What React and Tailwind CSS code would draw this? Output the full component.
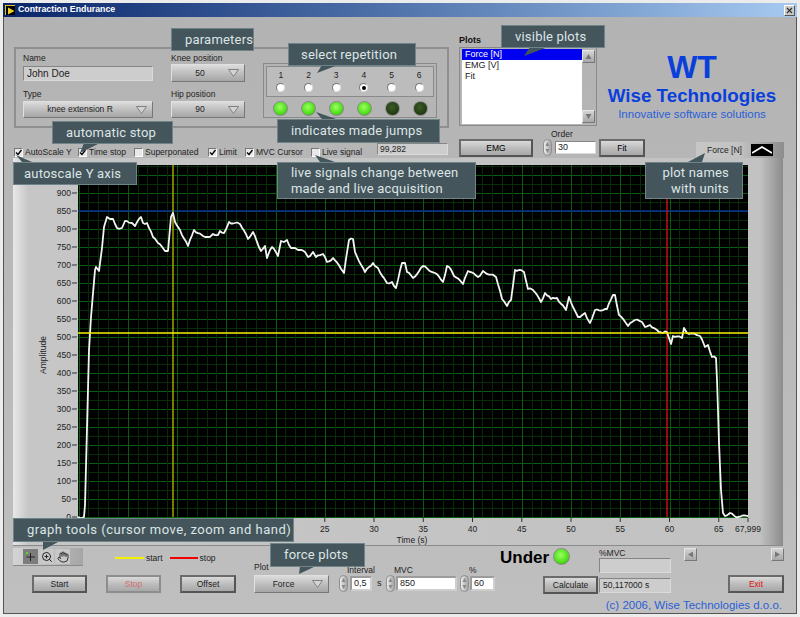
import { Hand, ZoomIn } from "lucide-react";

const knots =
  "78,517 84,517 85,505 89,350 91,317 95,270 96,267 99,271 102,248 104,227 107,217 110,219 113,219 117,228 122,228 125,221 132,223 135,226 141,217 143,223 147,223 153,237 158,243 165,251 168,251 171,217 173,213 175,222 180,230 188,246 194,230 203,236 208,237 213,234 218,235 220,231 224,233 229,222 240,224 248,239 253,232 261,251 265,246 267,258 270,250 272,247 278,256 281,241 284,242 287,240 291,248 298,250 305,252 308,257 313,252 316,257 323,254 327,262 333,258 344,273 349,240 353,239 355,252 365,272 373,263 378,268 387,283 392,282 396,288 402,263 405,263 407,272 413,278 423,266 435,273 443,282 447,266 449,267 454,276 463,284 468,271 478,277 483,271 496,277 502,299 507,306 511,300 515,270 519,270 524,272 528,289 533,290 541,302 545,293 551,299 557,298 566,310 569,297 578,317 585,313 590,323 595,310 607,309 613,295 615,295 619,315 628,326 635,320 642,322 645,327 650,325 657,330 663,333 667,332 671,344 673,336 682,338 684,328 687,333 700,336 705,347 708,345 712,357 716,358 717,380 718,410 719,443 721,490 723,513 725,516 730,513 738,517 748,516"
    .split(" ")
    .map((p) => p.split(",").map(Number));

// the measured signal is noisy, so add a little fixed jitter between the knots
const trace = knots
  .flatMap(([x, y], i) => {
    const next = knots[i + 1];
    if (!next || next[0] - x < 4) return [`${x},${y}`];
    const mid = [];
    for (let px = x + 2; px < next[0] - 1; px += 2) {
      const t = (px - x) / (next[0] - x);
      const jitter = Math.sin(px * 2.7) * 1.1;
      mid.push(`${px},${(y + (next[1] - y) * t + jitter).toFixed(1)}`);
    }
    return [`${x},${y}`, ...mid];
  })
  .join(" ");

const yValues = Array.from({ length: 19 }, (_, i) => i * 50);
const xValues = [25, 30, 35, 40, 45, 50, 55, 60, 65];
const xPos = (s) => 78.5 + s * 9.85;
const yPos = (v) => 517 - v * 0.36;

const inset = "border border-t-[#858585] border-l-[#858585] border-b-[#dadada] border-r-[#dadada]";

const Label = ({ children, className = "" }) => (
  <div className={`text-[8.5px] leading-[10px] text-[#222] whitespace-nowrap ${className}`}>{children}</div>
);

const Check = ({ label, checked, className }) => (
  <div className={`flex items-center gap-[2px] ${className}`}>
    <div className="w-[9px] h-[9px] shrink-0 bg-[#e8e8e8] border border-[#777] border-b-white border-r-white flex items-center justify-center">
      {checked && (
        <svg width="7" height="7" viewBox="0 0 7 7">
          <path d="M1 3.5L3 5.5L6.5 1" stroke="#000" strokeWidth="1.4" fill="none" />
        </svg>
      )}
    </div>
    <span className="text-[8.5px] leading-[10px] text-[#222] whitespace-nowrap">{label}</span>
  </div>
);

const Triangle = () => (
  <svg width="11" height="8" viewBox="0 0 11 8">
    <path d="M0.5 0.5H10.5L5.5 7.5Z" fill="#d4d4d4" stroke="#808080" />
  </svg>
);

const Dropdown = ({ value, className }) => (
  <div className={`flex items-center justify-between pr-[5px] bg-gradient-to-b from-[#dcdcdc] via-[#bfbfbf] to-[#a6a6a6] border border-t-[#e0e0e0] border-l-[#e0e0e0] border-b-[#777] border-r-[#777] ${className}`}>
    <span className="flex-1 text-center text-[8.5px] text-[#222] whitespace-nowrap">{value}</span>
    <Triangle />
  </div>
);

const Button = ({ children, className = "", disabled }) => (
  <div
    className={`h-[18px] flex items-center justify-center text-[8.5px] border-2 bg-gradient-to-b from-[#dadada] via-[#bdbdbd] to-[#a8a8a8] ${
      disabled ? "border-[#8d8d8d]" : "border-t-[#6b6b6b] border-l-[#6b6b6b] border-b-[#555] border-r-[#555]"
    } ${className}`}
  >
    {children}
  </div>
);

const Spinner = () => (
  <div className="w-[9px] h-[17px] shrink-0 rounded-full border border-[#8f8f8f] bg-gradient-to-r from-[#ececec] to-[#a4a4a4] flex items-center justify-center">
    <svg width="7" height="13" viewBox="0 0 7 13">
      <path d="M3.5 1L5.5 5H1.5Z M3.5 12L1.5 8H5.5Z" fill="#888" />
    </svg>
  </div>
);

const NumField = ({ value, className }) => (
  <div className={`h-[15px] flex items-center pl-[2px] bg-white text-[9px] text-[#222] border-2 border-[#9c9c9c] border-b-[#cfcfcf] border-r-[#cfcfcf] ${className}`}>
    {value}
  </div>
);

const Led = ({ on, className = "w-[15px] h-[15px]" }) => (
  <div
    className={`rounded-full border border-[#8a8a8a] ${className} ${
      on
        ? "bg-[radial-gradient(circle_at_45%_40%,#9cff60,#4fe01a_60%,#2f9a10)]"
        : "bg-[radial-gradient(circle_at_45%_40%,#3b5c26,#223d14_65%,#14240c)]"
    }`}
  />
);

const Callout = ({ children, className }) => (
  <div className={`absolute z-20 bg-[#44555c] border border-[#6f8488] text-[#dde5e5] text-[13px] leading-[16px] tracking-[0.2px] font-['Roboto',sans-serif] flex items-center whitespace-nowrap ${className}`}>
    {children}
  </div>
);

const ArrowButton = ({ dir }) => (
  <div className="w-[13px] h-[13px] bg-gradient-to-b from-[#d4d4d4] to-[#a8a8a8] border border-t-[#e4e4e4] border-l-[#e4e4e4] border-b-[#777] border-r-[#777] flex items-center justify-center">
    <svg width="7" height="7" viewBox="0 0 7 7">
      {dir === "left" && <path d="M1 3.5L6 0.5V6.5Z" fill="#777" />}
      {dir === "right" && <path d="M6 3.5L1 0.5V6.5Z" fill="#777" />}
      {dir === "up" && <path d="M3.5 1L6.5 6H0.5Z" fill="#777" />}
      {dir === "down" && <path d="M3.5 6L6.5 1H0.5Z" fill="#777" />}
    </svg>
  </div>
);

const Graph = () => (
  <svg className="block" width="770" height="388" viewBox="13 158 770 388">
    <rect x="78" y="165" width="670" height="352" fill="#000" />
    {Array.from({ length: 40 }, (_, i) => 517 - i * 9).map((y) => (
      <line key={y} x1="78" x2="748" y1={y + 0.5} y2={y + 0.5} stroke={(517 - y) % 18 === 0 ? "#0a5c10" : "#052c07"} />
    ))}
    {Array.from({ length: 68 }, (_, i) => i).map((s) => (
      <line
        key={s}
        x1={Math.round(xPos(s)) + 0.5}
        x2={Math.round(xPos(s)) + 0.5}
        y1="165"
        y2="517"
        stroke={s % 5 === 0 ? "#0a5c10" : "#052c07"}
      />
    ))}
    <line x1="78" x2="748" y1="211" y2="211" stroke="#0a2f96" strokeWidth="1.6" />
    <line x1="173" x2="173" y1="165" y2="517" stroke="#a3a300" strokeWidth="1.5" />
    <line x1="667" x2="667" y1="165" y2="517" stroke="#d01010" strokeWidth="1.4" />
    <polyline points={trace} fill="none" stroke="#f4f4f4" strokeWidth="1.8" strokeLinejoin="round" />
    <line x1="78" x2="748" y1="333" y2="333" stroke="#f2f200" strokeWidth="1.6" />
    {yValues.map((v) => (
      <g key={v}>
        <line x1="72" x2="77" y1={yPos(v)} y2={yPos(v)} stroke="#333" />
        <text x="71" y={yPos(v) + 3} textAnchor="end" fontSize="8.5" fill="#222">
          {v}
        </text>
      </g>
    ))}
    {xValues.map((s) => (
      <g key={s}>
        <line x1={xPos(s)} x2={xPos(s)} y1="518" y2="522" stroke="#333" />
        <text x={xPos(s)} y="532" textAnchor="middle" fontSize="8.5" fill="#222">
          {s}
        </text>
      </g>
    ))}
    <line x1="748" x2="748" y1="518" y2="522" stroke="#333" />
    <text x="748" y="532" textAnchor="middle" fontSize="8.5" fill="#222">
      67,999
    </text>
    <text x="412" y="543" textAnchor="middle" fontSize="8.5" fill="#222">
      Time (s)
    </text>
    <text transform="translate(46 355) rotate(-90)" textAnchor="middle" fontSize="8.5" fill="#222">
      Amplitude
    </text>
  </svg>
);

export default function App() {
  return (
    <div className="relative w-[800px] h-[617px] overflow-hidden bg-[#ececec] p-[3px] flex flex-col font-['Liberation_Sans',Arial,sans-serif]">
      {/* title bar */}
      <div className="h-[14px] shrink-0 flex items-center bg-gradient-to-r from-[#0a246a] to-[#a6caf0] pl-[2px] pr-[2px]">
        <div className="w-[10px] h-[10px] bg-black border-t border-l border-[#e0c020] flex items-center justify-center">
          <svg width="8" height="8" viewBox="0 0 8 8">
            <path d="M1 0.5L7.5 4L1 7.5Z" fill="#f0d020" />
          </svg>
        </div>
        <span className="ml-[3px] text-[8.8px] font-bold text-white whitespace-nowrap">Contraction Endurance</span>
        <div className="ml-auto w-[11px] h-[11px] bg-[#c8c8c8] border border-t-white border-l-white border-b-[#555] border-r-[#555] flex items-center justify-center">
          <svg width="7" height="7" viewBox="0 0 7 7">
            <path d="M1 1L6 6M6 1L1 6" stroke="#333" strokeWidth="1.2" />
          </svg>
        </div>
      </div>

      {/* panel */}
      <div className="flex-1 flex flex-col border border-t-0 border-[#555] bg-gradient-to-b from-[#b3b3b3] to-[#bfbfbf]">
        {/* top section */}
        <div className="h-[120px] shrink-0 flex items-start pl-[10px]">
          <div className="mt-[30px] w-[435px] h-[81px] flex pl-[7px] pt-[4px] border-2 border-[#8f8f8f]">
            <div className="w-[130px] flex flex-col">
              <Label className="mb-[3px]">Name</Label>
              <div className={`h-[15px] flex items-center pl-[3px] bg-[#cdcdcd] text-[10px] text-[#222] ${inset}`}>John Doe</div>
              <Label className="mt-[8px] mb-[2px]">Type</Label>
              <Dropdown value="knee extension R" className="h-[17px]" />
            </div>
            <div className="ml-[18px] w-[74px] flex flex-col">
              <Label className="mb-[1px]">Knee position</Label>
              <Dropdown value="50" className="h-[18px]" />
              <Label className="mt-[7px] mb-[2px]">Hip position</Label>
              <Dropdown value="90" className="h-[17px]" />
            </div>
            <div className="ml-[18px] mt-[10px] w-[174px] h-[55px] pl-[2px] pt-[2px] border border-[#8a8a8a]">
              <div className="w-[168px] grid grid-cols-6 h-[31px] border border-[#8a8a8a] bg-[#bcbcbc]">
                {[1, 2, 3, 4, 5, 6].map((n) => (
                  <div key={n} className="flex flex-col items-center pt-[3px]">
                    <span className="text-[8.5px] leading-[10px] text-[#222]">{n}</span>
                    <div className="mt-[3px] w-[9px] h-[9px] rounded-full bg-white border border-[#777] border-b-[#ddd] border-r-[#ddd] flex items-center justify-center">
                      {n === 4 && <div className="w-[4px] h-[4px] rounded-full bg-black" />}
                    </div>
                  </div>
                ))}
              </div>
              <div className="w-[168px] grid grid-cols-6 pt-[4px] justify-items-center">
                {[1, 2, 3, 4, 5, 6].map((n) => (
                  <Led key={n} on={n < 5} />
                ))}
              </div>
            </div>
          </div>

          <div className="ml-[10px] mt-[17px] w-[138px]">
            <div className="h-[13px] text-[9px] leading-[13px] font-bold text-[#111]">Plots</div>
            <div className="h-[79px] flex pl-[2px] pt-[1px] pb-[1px] pr-[1px] border border-[#8a8a8a]">
              <div className="w-[121px] h-full bg-white text-[9px] leading-[11px] text-[#222]">
                <div className="bg-[#0000f0] text-white pl-[3px]">Force [N]</div>
                <div className="pl-[3px]">EMG [V]</div>
                <div className="pl-[3px]">Fit</div>
              </div>
              <div className="flex-1 flex flex-col justify-between items-center py-[1px]">
                <ArrowButton dir="up" />
                <ArrowButton dir="down" />
              </div>
            </div>
          </div>

          <div className="w-[190px] mt-[34px] text-center text-[#0a3fdc]">
            <div className="text-[32px] leading-[32px] font-bold">WT</div>
            <div className="mt-[3px] text-[18.8px] leading-[20px] font-bold whitespace-nowrap">Wise Technologies</div>
            <div className="mt-[1px] text-[11.5px] leading-[14px] text-[#2a5fd8] whitespace-nowrap">Innovative software solutions</div>
          </div>
        </div>

        {/* toolbar row */}
        <div className="h-[21px] shrink-0 flex items-end pl-[10px]">
          <Check checked label="AutoScale Y" className="w-[64px] mb-[1px]" />
          <Check checked label="Time stop" className="w-[56px] mb-[1px]" />
          <Check label="Superponated" className="w-[74px] mb-[1px]" />
          <Check checked label="Limit" className="w-[37px] mb-[1px]" />
          <Check checked label="MVC Cursor" className="w-[66px] mb-[1px]" />
          <Check label="Live signal" className="w-[66px] mb-[1px]" />
          <div className={`w-[71px] h-[12px] mb-[3px] flex items-center pl-[2px] bg-[#cdcdcd] text-[8.5px] text-[#222] ${inset}`}>99,282</div>
          <Button className="ml-[11px] w-[74px] mb-[1px]">EMG</Button>
          <div className="ml-[10px] mb-[2px] flex items-center gap-[3px]">
            <Spinner />
            <div className="relative">
              <Label className="absolute left-[-4px] top-[-12px]">Order</Label>
              <div className={`w-[41px] h-[13px] flex items-center pl-[2px] bg-white text-[9px] text-[#222] ${inset}`}>30</div>
            </div>
          </div>
          <Button className="ml-[3px] w-[46px] mb-[1px]">Fit</Button>
          <div className="ml-[51px] w-[88px] h-[16px] flex items-center pl-[11px] bg-gradient-to-r from-[#c6c6c6] via-[#c2c2c2] to-[#8d8d8d] text-[8.5px] text-[#222]">
            <span className="w-[44px] whitespace-nowrap">Force [N]</span>
            <div className="w-[22px] h-[12px] bg-black flex items-center justify-center">
              <svg width="20" height="10" viewBox="0 0 20 10">
                <path d="M0 8L10 2L20 8" stroke="#fff" strokeWidth="1.6" fill="none" />
              </svg>
            </div>
          </div>
        </div>

        {/* graph */}
        <div className="ml-[9px] w-[770px] h-[388px] shrink-0 border-b border-[#8a8a8a] bg-[linear-gradient(90deg,#e8e8e8_0%,#c6c6c6_2%,#c2c2c2_97%,#8c8c8c_100%)]">
          <Graph />
        </div>

        {/* bottom section */}
        <div className="flex-1 ml-[9px] w-[771px] flex">
          <div className="w-[223px] flex flex-col">
            <div className="h-[29px] pt-[2px] flex">
              <div className="w-[70px] h-[18px] flex items-center gap-[1px] pl-[10px] bg-gradient-to-r from-[#d4d4d4] to-[#a6a6a6] border-b border-[#8a8a8a]">
                <div className="w-[15px] h-[15px] bg-[#7c7c7c] flex items-center justify-center">
                  <svg width="11" height="11" viewBox="0 0 11 11">
                    <path d="M5.5 2V10M1.5 6H10" stroke="#222" />
                    <rect x="1" y="1" width="2" height="2" fill="#4fe01a" />
                  </svg>
                </div>
                <div className="w-[15px] h-[15px] flex items-center justify-center bg-[#c8c8c8] text-[#222]">
                  <ZoomIn size={12} strokeWidth={2} />
                </div>
                <div className="w-[15px] h-[15px] flex items-center justify-center bg-[#c8c8c8] text-[#222]">
                  <Hand size={12} strokeWidth={1.8} />
                </div>
              </div>
              <div className="ml-[32px] mt-[9px] w-[29px] h-[2px] bg-[#f2f200]" />
              <Label className="ml-[2px] mt-[5px]">start</Label>
              <div className="ml-[7px] mt-[9px] w-[28px] h-[2px] bg-[#f00000]" />
              <Label className="ml-[2px] mt-[5px]">stop</Label>
            </div>
            <div className="flex pl-[19px] gap-[19px] text-[#222]">
              <Button className="w-[55px]">Start</Button>
              <Button disabled className="w-[55px] text-[#d07070]">Stop</Button>
              <Button className="w-[56px]">Offset</Button>
            </div>
          </div>

          <div className="ml-[18px] w-[75px] flex flex-col pt-[16px]">
            <Label className="h-[13px]">Plot</Label>
            <Dropdown value="Force" className="h-[18px]" />
          </div>

          <div className="ml-[10px] w-[43px] flex flex-col pt-[19px]">
            <Label className="ml-[8px] h-[10px]">Interval</Label>
            <div className="flex items-center gap-[2px]">
              <Spinner />
              <NumField value="0,5" className="w-[22px]" />
              <span className="ml-[3px] text-[9px] text-[#222]">s</span>
            </div>
          </div>

          <div className="ml-[4px] w-[71px] flex flex-col pt-[19px]">
            <Label className="ml-[8px] h-[10px]">MVC</Label>
            <div className="flex items-center gap-[1px]">
              <Spinner />
              <NumField value="850" className="w-[61px]" />
            </div>
          </div>

          <div className="ml-[3px] w-[35px] flex flex-col pt-[19px]">
            <Label className="ml-[9px] h-[10px]">%</Label>
            <div className="flex items-center gap-[1px]">
              <Spinner />
              <NumField value="60" className="w-[25px]" />
            </div>
          </div>

          <div className="ml-[5px] w-[284px] flex flex-col">
            <div className="h-[54px] flex">
              <div className="w-[99px] flex flex-col">
                <div className="h-[30px] flex items-start pt-[2px]">
                  <span className="text-[17px] leading-[18px] font-bold text-black mt-[1px]">Under</span>
                  <Led on className="ml-[4px] w-[17px] h-[17px]" />
                </div>
                <Button className="ml-[43px] w-[55px] text-[#222]">Calculate</Button>
              </div>
              <div className="w-[72px] flex flex-col pt-[2px]">
                <Label className="h-[10px]">%MVC</Label>
                <div className={`h-[15px] bg-[#cdcdcd] ${inset}`} />
                <div className={`mt-[5px] h-[15px] flex items-center pl-[3px] bg-[#cdcdcd] text-[8.5px] text-[#222] ${inset}`}>50,117000 s</div>
              </div>
              <div className="ml-[13px] w-[100px] flex flex-col pt-[2px]">
                <div className="flex justify-between">
                  <ArrowButton dir="left" />
                  <ArrowButton dir="right" />
                </div>
                <Button className="mt-[14px] ml-auto w-[56px] text-[#e01010]">Exit</Button>
              </div>
            </div>
            <div className="mt-[-1px] text-right pr-[2px] text-[11.5px] leading-[13px] text-[#2a5fd8] whitespace-nowrap">
              (c) 2006, Wise Technologies d.o.o.
            </div>
          </div>
        </div>
      </div>

      {/* annotations over the screenshot */}
      <svg className="absolute inset-0 z-10 pointer-events-none" width="800" height="617">
        <g fill="#44555c">
          <polygon points="322,65 338,65 317,73" />
          <polygon points="530,47 548,47 524,56" />
          <polygon points="316,112 322,119 336,119" />
          <polygon points="84,143 100,143 80,153" />
          <polygon points="16,155 22,162 32,162" />
          <polygon points="315,155 320,162 335,162" />
          <polygon points="705,153 688,162 702,162" />
          <polygon points="43,541 60,541 43,550" />
          <polygon points="300,566 316,566 299,574" />
        </g>
      </svg>
      <Callout className="left-[171px] top-[28px] w-[83px] h-[23px] pl-[13px]">parameters</Callout>
      <Callout className="left-[288px] top-[43px] w-[128px] h-[23px] pl-[12px]">select repetition</Callout>
      <Callout className="left-[501px] top-[25px] w-[104px] h-[23px] pl-[13px]">visible plots</Callout>
      <Callout className="left-[277px] top-[119px] w-[163px] h-[24px] pl-[13px]">indicates made jumps</Callout>
      <Callout className="left-[52px] top-[121px] w-[121px] h-[23px] pl-[13px]">automatic stop</Callout>
      <Callout className="left-[13px] top-[162px] w-[124px] h-[23px] pl-[10px]">autoscale Y axis</Callout>
      <Callout className="left-[277px] top-[162px] w-[199px] h-[37px] pl-[13px]">
        <span>
          live signals change between
          <br />
          made and live acquisition
        </span>
      </Callout>
      <Callout className="left-[645px] top-[162px] w-[98px] h-[37px] justify-end pr-[13px] text-right">
        <span>
          plot names
          <br />
          with units
        </span>
      </Callout>
      <Callout className="left-[13px] top-[518px] w-[281px] h-[24px] pl-[13px]">
        <span className="tracking-[0.5px]">graph tools (cursor move, zoom and hand)</span>
      </Callout>
      <Callout className="left-[270px] top-[543px] w-[95px] h-[24px] pl-[13px]">force plots</Callout>
    </div>
  );
}
